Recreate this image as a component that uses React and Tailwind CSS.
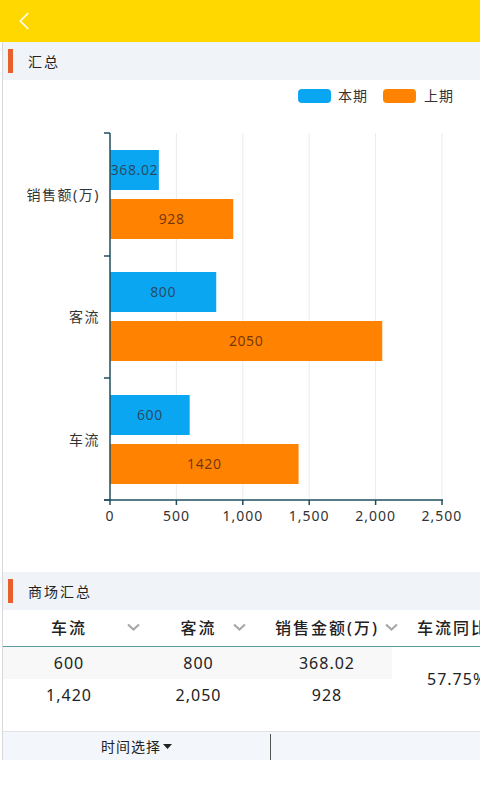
import React from 'react';
import { ChevronLeft } from 'lucide-react';

const font = { fontFamily: '"Noto Sans", "Noto Sans CJK SC", sans-serif' };

// chart scale: 0 -> x=110, 2500 -> x=442
const X0 = 110;
const K = 332 / 2500;

const groups = [
  { label: '销售额(万)', cur: 368.02, prev: 928, y: 68 },
  { label: '客流', cur: 800, prev: 2050, y: 190 },
  { label: '车流', cur: 600, prev: 1420, y: 313 },
];

function SectionHeader({ title }) {
  return (
    <div className="flex h-[38px] items-center bg-[#F0F4F9]">
      <div className="ml-[5px] h-[24px] w-[5px] bg-[#E8602C]" />
      <span className="ml-[15px] text-[14px] tracking-[2px] text-[#222]">{title}</span>
    </div>
  );
}

function Chart() {
  const ticks = [0, 500, 1000, 1500, 2000, 2500];
  return (
    <svg width="477" height="490" className="block">
      {/* legend */}
      <rect x="295" y="7" width="33" height="14" rx="4" fill="#0AA6F2" />
      <text x="335" y="19" fontSize="14" letterSpacing="1" fill="#333">本期</text>
      <rect x="380" y="7" width="33" height="14" rx="4" fill="#FF8300" />
      <text x="421" y="19" fontSize="14" letterSpacing="1" fill="#333">上期</text>

      {/* grid */}
      {ticks.slice(1).map((t) => (
        <line key={t} x1={X0 + t * K - 3} x2={X0 + t * K - 3} y1="51" y2="418" stroke="#ececec" strokeWidth="1" />
      ))}

      {/* bars */}
      {groups.map((g) => (
        <g key={g.label}>
          <rect x={X0 - 3} y={g.y} width={g.cur * K} height="40" fill="#0AA6F2" />
          <text x={X0 - 3 + (g.cur * K) / 2} y={g.y + 25} fontSize="14" letterSpacing="0.6" textAnchor="middle" fill="#2a3a4a" fillOpacity="0.85">
            {g.cur}
          </text>
          <rect x={X0 - 3} y={g.y + 49} width={g.prev * K} height="40" fill="#FF8300" />
          <text x={X0 - 3 + (g.prev * K) / 2} y={g.y + 74} fontSize="14" letterSpacing="0.6" textAnchor="middle" fill="#5a2a10" fillOpacity="0.85">
            {g.prev}
          </text>
          <text x="97" y={g.y + 50} fontSize="14" letterSpacing="1.5" textAnchor="end" fill="#333">{g.label}</text>
        </g>
      ))}

      {/* y axis */}
      <line x1="107" x2="107" y1="51" y2="418" stroke="#1f4e5f" strokeWidth="1.5" />
      {[51, 174, 296, 418].map((y) => (
        <line key={y} x1="101" x2="107" y1={y} y2={y} stroke="#1f4e5f" strokeWidth="1.5" />
      ))}

      {/* x axis */}
      <line x1="101" x2="440" y1="418" y2="418" stroke="#1f4e5f" strokeWidth="1.5" />
      {ticks.map((t) => (
        <g key={t}>
          <line x1={X0 + t * K - 3} x2={X0 + t * K - 3} y1="418" y2="423" stroke="#1f4e5f" strokeWidth="1.5" />
          <text x={X0 + t * K - 3} y="439" fontSize="14" letterSpacing="1" textAnchor="middle" fill="#333">
            {t.toLocaleString('en-US')}
          </text>
        </g>
      ))}
    </svg>
  );
}

function Chev() {
  return (
    <svg width="13" height="8" viewBox="0 0 13 8">
      <path d="M1 1.5 L6.5 6.5 L12 1.5" fill="none" stroke="#a8a8a8" strokeWidth="2.2" />
    </svg>
  );
}

export default function App() {
  return (
    <div className="h-[800px] w-[480px] overflow-hidden bg-white" style={font}>
      <div className="flex h-[42px] items-center bg-[#FFD800] pl-[9px]">
        <ChevronLeft className="h-[30px] w-[30px] text-white" strokeWidth={1.4} />
      </div>

      <div className="ml-[2px] border-l border-[#d8d8d8]">
        <SectionHeader title="汇总" />
        <div className="h-[2px]" />
        <Chart />

        <SectionHeader title="商场汇总" />

        <div className="overflow-hidden">
          <div className="flex h-[37px] w-[520px] items-center border-b-[1.5px] border-[#5b9aa2] text-[16px] font-medium tracking-[2px] text-[#222]">
            <div className="relative w-[132px] text-center">
              车流
              <span className="absolute left-[124px] top-[7px]"><Chev /></span>
            </div>
            <div className="relative w-[127px] text-center">
              客流
              <span className="absolute left-[98px] top-[7px]"><Chev /></span>
            </div>
            <div className="relative w-[130px] text-center">
              销售金额(万)
              <span className="absolute left-[123px] top-[7px]"><Chev /></span>
            </div>
            <div className="w-[120px] pl-[25px] text-left">车流同比</div>
          </div>

          <div className="flex w-[520px] text-[16px] tracking-[1px] text-[#222]">
            <div className="flex flex-col">
              <div className="flex h-[32px] items-center bg-[#F8F8F8]">
                <div className="w-[132px] text-center">600</div>
                <div className="w-[127px] text-center">800</div>
                <div className="w-[130px] text-center">368.02</div>
              </div>
              <div className="flex h-[32px] items-center">
                <div className="w-[132px] text-center">1,420</div>
                <div className="w-[127px] text-center">2,050</div>
                <div className="w-[130px] text-center">928</div>
              </div>
            </div>
            <div className="flex h-[64px] w-[120px] items-center pl-[35px]">
              <span>57.75%</span>
            </div>
          </div>
        </div>

        <div className="h-[20px]" />

        <div className="flex h-[29px] border-t border-[#dfe3e8] bg-[#F3F6FA]">
          <div className="flex w-[267px] items-center justify-center text-[14px] tracking-[1px] text-[#222]">
            时间选择
            <svg width="9" height="5" viewBox="0 0 9 5" className="ml-[2px]">
              <path d="M0 0 L9 0 L4.5 5 Z" fill="#222" />
            </svg>
          </div>
          <div className="mt-[2px] w-px bg-[#555]" />
          <div className="flex-1" />
        </div>
      </div>
    </div>
  );
}
